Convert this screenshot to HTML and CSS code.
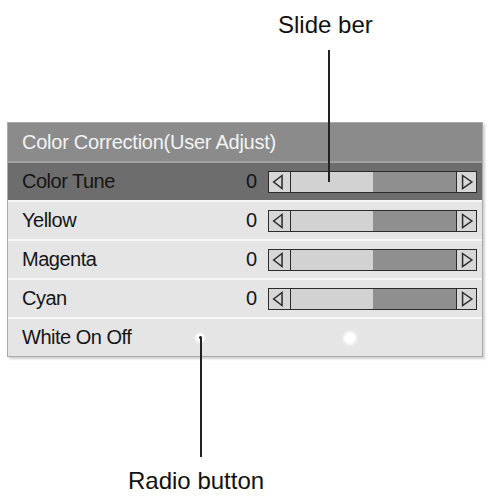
FILE: index.html
```html
<!DOCTYPE html>
<html>
<head>
<meta charset="utf-8">
<link rel="stylesheet" href="styles.css">
</head>
<body>
<div class="page">
  <div class="top-caption"><span class="caption">Slide ber</span></div>

  <div class="panel">
    <div class="header">Color Correction(User Adjust)</div>

    <div class="row selected">
      <span class="label">Color Tune</span>
      <span class="value">0</span>
      <div class="slider">
        <div class="arrow left"><svg width="22" height="20" viewBox="0 0 22 20"><path d="M14 3 L5 10 L14 17 Z" fill="none" stroke="#2a2a2a" stroke-width="1.6"/></svg></div>
        <div class="fill light"></div>
        <div class="fill dark"></div>
        <div class="arrow right"><svg width="21" height="20" viewBox="0 0 21 20"><path d="M6 3 L16 10 L6 17 Z" fill="none" stroke="#2a2a2a" stroke-width="1.6"/></svg></div>
      </div>
    </div>

    <div class="row">
      <span class="label">Yellow</span>
      <span class="value">0</span>
      <div class="slider">
        <div class="arrow left"><svg width="22" height="20" viewBox="0 0 22 20"><path d="M14 3 L5 10 L14 17 Z" fill="none" stroke="#2a2a2a" stroke-width="1.6"/></svg></div>
        <div class="fill light"></div>
        <div class="fill dark"></div>
        <div class="arrow right"><svg width="21" height="20" viewBox="0 0 21 20"><path d="M6 3 L16 10 L6 17 Z" fill="none" stroke="#2a2a2a" stroke-width="1.6"/></svg></div>
      </div>
    </div>

    <div class="row">
      <span class="label">Magenta</span>
      <span class="value">0</span>
      <div class="slider">
        <div class="arrow left"><svg width="22" height="20" viewBox="0 0 22 20"><path d="M14 3 L5 10 L14 17 Z" fill="none" stroke="#2a2a2a" stroke-width="1.6"/></svg></div>
        <div class="fill light"></div>
        <div class="fill dark"></div>
        <div class="arrow right"><svg width="21" height="20" viewBox="0 0 21 20"><path d="M6 3 L16 10 L6 17 Z" fill="none" stroke="#2a2a2a" stroke-width="1.6"/></svg></div>
      </div>
    </div>

    <div class="row">
      <span class="label">Cyan</span>
      <span class="value">0</span>
      <div class="slider">
        <div class="arrow left"><svg width="22" height="20" viewBox="0 0 22 20"><path d="M14 3 L5 10 L14 17 Z" fill="none" stroke="#2a2a2a" stroke-width="1.6"/></svg></div>
        <div class="fill light"></div>
        <div class="fill dark"></div>
        <div class="arrow right"><svg width="21" height="20" viewBox="0 0 21 20"><path d="M6 3 L16 10 L6 17 Z" fill="none" stroke="#2a2a2a" stroke-width="1.6"/></svg></div>
      </div>
    </div>

    <div class="row radio-row">
      <span class="label radio-label">White On Off</span>
      <span class="radio on"></span>
      <span class="radio off"></span>
    </div>
  </div>

  <div class="bottom-caption"><span class="caption">Radio button</span></div>

  <div class="leader leader-slide"></div>
  <div class="leader leader-radio"></div>
</div>
</body>
</html>
```

FILE: styles.css
```css
html, body {
  margin: 0;
  padding: 0;
  background: #ffffff;
}

.page {
  position: relative;
  width: 490px;
  height: 496px;
  font-family: "Liberation Sans", Arial, sans-serif;
  color: #151515;
}

.caption {
  font-size: 24px;
  line-height: 24px;
  color: #111111;
}

.top-caption {
  height: 122px;
  box-sizing: border-box;
  padding-top: 13px;
  padding-left: 278px;
}

.panel {
  margin-left: 7px;
  width: 476px;
  box-sizing: border-box;
  border: 1px solid #a9a9a9;
  background: #e5e5e5;
  box-shadow: 2px 2px 2px rgba(0, 0, 0, 0.18);
}

.header {
  height: 38px;
  display: flex;
  align-items: center;
  padding-left: 14px;
  background: #8b8b8b;
  color: #f3f3f3;
  font-size: 20px;
  letter-spacing: -0.25px;
}

.row {
  height: 39px;
  box-sizing: border-box;
  border-top: 2px solid #f7f7f7;
  display: grid;
  grid-template-columns: 1fr auto 209px;
  column-gap: 12px;
  align-items: center;
  padding-left: 14px;
  padding-right: 5px;
  font-size: 20px;
  letter-spacing: -0.5px;
  background: #e5e5e5;
}

.row.selected {
  background: #6d6d6d;
  border-top-color: #a2a2a2;
}

.label {
  white-space: nowrap;
}

.value {
  letter-spacing: 0;
  margin-right: -1px;
}

.slider {
  height: 22px;
  box-sizing: border-box;
  border: 1.5px solid #2b2b2b;
  display: flex;
}

.arrow {
  flex: 0 0 auto;
  background: #d7d7d7;
  display: flex;
  align-items: center;
  justify-content: center;
}

.arrow svg {
  display: block;
}

.arrow.left {
  width: 20.5px;
  border-right: 1.5px solid #2b2b2b;
}

.arrow.right {
  width: 19.5px;
  border-left: 1.5px solid #2b2b2b;
}

.fill {
  flex: 1 1 0;
}

.fill.light {
  background: #d2d2d2;
}

.fill.dark {
  background: #8f8f8f;
}

.radio-row {
  display: flex;
  align-items: center;
  column-gap: 0;
}

.radio-label {
  flex: 0 0 174px;
}

.radio {
  display: block;
  border-radius: 50%;
  background: #ffffff;
}

.radio.on {
  width: 8px;
  height: 8px;
  box-shadow: 0 0 2px 1px rgba(255, 255, 255, 0.9);
  position: relative;
}

.radio.on::after {
  content: "";
  position: absolute;
  left: 2.5px;
  top: 2.5px;
  width: 3px;
  height: 3px;
  border-radius: 50%;
  background: #1a1a1a;
}

.radio.off {
  width: 10px;
  height: 10px;
  margin-left: 141px;
  box-shadow: 0 0 3px 2px rgba(255, 255, 255, 0.85);
}

.bottom-caption {
  padding-top: 112px;
  padding-left: 128px;
}

.leader {
  position: absolute;
  width: 1.5px;
  background: #222222;
}

.leader-slide {
  left: 328px;
  top: 50px;
  height: 132px;
}

.leader-radio {
  left: 200px;
  top: 338px;
  height: 119px;
}
```
